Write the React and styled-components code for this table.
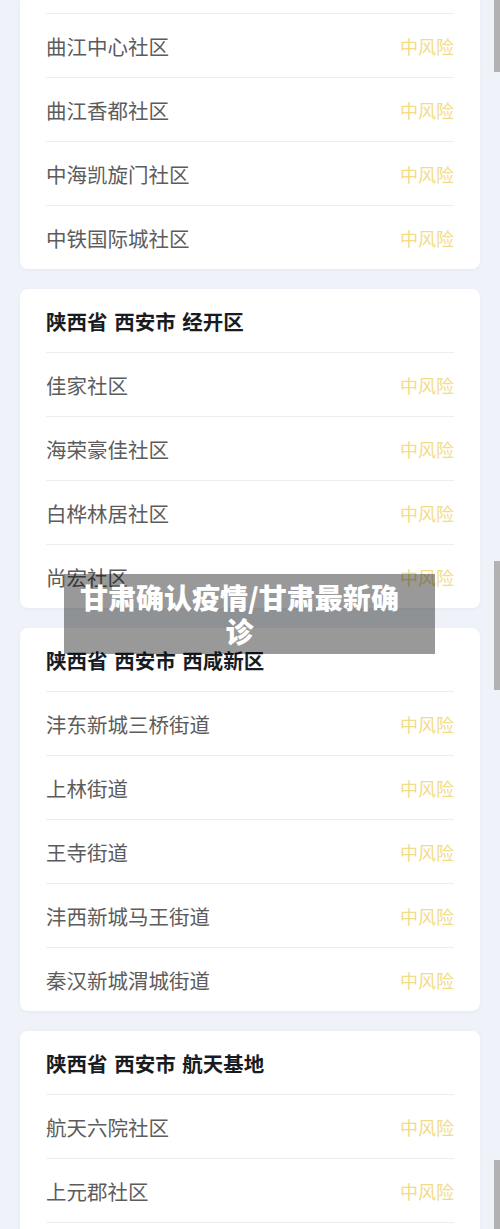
import React from "react";
import styled, { createGlobalStyle } from "styled-components";

const Global = createGlobalStyle`
  html, body {
    margin: 0;
    padding: 0;
    background: #eff3f9;
    font-family: "Noto Sans CJK SC", "Noto Sans", sans-serif;
  }
  body { overflow: hidden; }
`;

const Page = styled.div`
  position: relative;
  width: 500px;
  height: 1229px;
  overflow: hidden;
  background: #eff3f9;
  display: flex;
  flex-direction: column;
  gap: 20px;
`;

const Card = styled.section`
  margin: 0 20px;
  padding: ${(p) => (p.$cut ? "13px 26px 0" : p.$more ? "0 26px 40px" : "0 26px")};
  background: #ffffff;
  border-radius: ${(p) => (p.$cut ? "0 0 8px 8px" : "8px")};
  box-shadow: 0 1px 4px rgba(40, 60, 90, 0.05);
  display: flex;
  flex-direction: column;
  ${(p) => p.$more && "& > div:last-child { border-bottom: 1px solid #ededed; }"}
`;

const Header = styled.h2`
  margin: 0;
  height: 63px;
  display: flex;
  align-items: center;
  font-size: 20.5px;
  font-weight: 700;
  color: #181c22;
  word-spacing: 2px;
`;

const Row = styled.div`
  height: 63px;
  border-top: 1px solid #ededed;
  display: flex;
  align-items: center;
  justify-content: space-between;
`;

const Name = styled.span`
  font-size: 20.5px;
  color: #5c5c5c;
`;

const Risk = styled.span`
  font-size: 18px;
  color: #f3dc85;
`;

const Overlay = styled.div`
  position: absolute;
  left: 64px;
  top: 574px;
  width: 371px;
  height: 80px;
  box-sizing: border-box;
  padding: 6px 34px 6px 14px;
  background: rgba(0, 0, 0, 0.4);
  color: #ffffff;
  font-size: 28px;
  font-weight: 900;
  line-height: 34px;
  text-align: center;
`;

const Thumb = styled.div`
  position: absolute;
  right: 0;
  width: 6px;
  background: #b2b2b2;
`;

const data = [
  {
    cut: true,
    rows: ["曲江中心社区", "曲江香都社区", "中海凯旋门社区", "中铁国际城社区"],
  },
  {
    title: "陕西省 西安市 经开区",
    rows: ["佳家社区", "海荣豪佳社区", "白桦林居社区", "尚宏社区"],
  },
  {
    title: "陕西省 西安市 西咸新区",
    rows: ["沣东新城三桥街道", "上林街道", "王寺街道", "沣西新城马王街道", "秦汉新城渭城街道"],
  },
  {
    title: "陕西省 西安市 航天基地",
    more: true,
    rows: ["航天六院社区", "上元郡社区"],
  },
];

export default function App() {
  return (
    <>
      <Global />
      <Page>
        {data.map((card, i) => (
          <Card key={i} $cut={card.cut} $more={card.more}>
            {card.title && <Header>{card.title}</Header>}
            {card.rows.map((r) => (
              <Row key={r}>
                <Name>{r}</Name>
                <Risk>中风险</Risk>
              </Row>
            ))}
          </Card>
        ))}
        <Overlay>甘肃确认疫情/甘肃最新确诊</Overlay>
        <Thumb style={{ top: 0, height: 72 }} />
        <Thumb style={{ top: 561, height: 129 }} />
        <Thumb style={{ top: 1160, height: 69 }} />
      </Page>
    </>
  );
}
